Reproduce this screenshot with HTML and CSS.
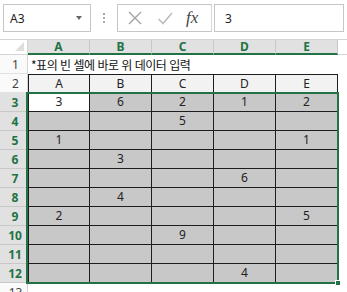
FILE: index.html
```html
<!DOCTYPE html>
<html lang="ko">
<head>
<meta charset="utf-8">
<link rel="stylesheet" href="styles.css">
</head>
<body>
<div class="fbar">
  <div class="namebox"><span class="ref">A3</span><span class="caret"></span></div>
  <div class="dots"><i></i><i></i><i></i></div>
  <div class="fxbox">
    <svg class="ic" width="16" height="16" viewBox="0 0 16 16"><path d="M2 2 L14 14 M14 2 L2 14" stroke="#a3a3a3" stroke-width="1.4" fill="none"/></svg>
    <svg class="ic" width="16" height="16" viewBox="0 0 16 16"><path d="M1.5 9 L6 13.5 L15 3" stroke="#bdbdbd" stroke-width="1.6" fill="none"/></svg>
    <span class="fx">fx</span>
  </div>
  <div class="input">3</div>
</div>

<div class="sheet">
  <div class="corner"></div>
  <div class="ch">A</div><div class="ch">B</div><div class="ch">C</div><div class="ch">D</div><div class="ch">E</div><div class="ch rest"></div>

  <div class="rh">1</div>
  <div class="title">*표의 빈 셀에 바로 위 데이터 입력</div>

  <div class="rh">2</div>
  <div class="c hd first">A</div><div class="c hd">B</div><div class="c hd">C</div><div class="c hd">D</div><div class="c hd">E</div><div class="blank"></div>

  <div class="rh sel">3</div>
  <div class="c first active">3</div><div class="c">6</div><div class="c">2</div><div class="c">1</div><div class="c">2</div><div class="blank"></div>

  <div class="rh sel">4</div>
  <div class="c first"></div><div class="c"></div><div class="c">5</div><div class="c"></div><div class="c"></div><div class="blank"></div>

  <div class="rh sel">5</div>
  <div class="c first">1</div><div class="c"></div><div class="c"></div><div class="c"></div><div class="c">1</div><div class="blank"></div>

  <div class="rh sel">6</div>
  <div class="c first"></div><div class="c">3</div><div class="c"></div><div class="c"></div><div class="c"></div><div class="blank"></div>

  <div class="rh sel">7</div>
  <div class="c first"></div><div class="c"></div><div class="c"></div><div class="c">6</div><div class="c"></div><div class="blank"></div>

  <div class="rh sel">8</div>
  <div class="c first"></div><div class="c">4</div><div class="c"></div><div class="c"></div><div class="c"></div><div class="blank"></div>

  <div class="rh sel">9</div>
  <div class="c first">2</div><div class="c"></div><div class="c"></div><div class="c"></div><div class="c">5</div><div class="blank"></div>

  <div class="rh sel">10</div>
  <div class="c first"></div><div class="c"></div><div class="c">9</div><div class="c"></div><div class="c"></div><div class="blank"></div>

  <div class="rh sel">11</div>
  <div class="c first"></div><div class="c"></div><div class="c"></div><div class="c"></div><div class="c"></div><div class="blank"></div>

  <div class="rh sel">12</div>
  <div class="c first"></div><div class="c"></div><div class="c"></div><div class="c">4</div><div class="c"></div><div class="blank"></div>

  <div class="rh">13</div>

  <div class="selection"><span class="handle"></span></div>
</div>
</body>
</html>
```

FILE: styles.css
```css
* { box-sizing: border-box; }
html, body { margin: 0; padding: 0; background: #fff; }
body {
  width: 347px;
  height: 292px;
  overflow: hidden;
  font-family: "Noto Sans", "Noto Sans CJK KR", sans-serif;
  font-size: 11px;
  color: #222;
}

.fbar {
  display: flex;
  align-items: stretch;
  height: 28px;
  padding: 0 3px;
  margin-top: 4px;
}
.namebox {
  width: 88px;
  border: 1px solid #c6c6c6;
  display: flex;
  align-items: center;
  justify-content: space-between;
  padding: 0 8px 0 6px;
  font-size: 12px;
  color: #222;
}
.caret {
  width: 0; height: 0;
  border-left: 3px solid transparent;
  border-right: 3px solid transparent;
  border-top: 4px solid #666;
}
.dots {
  width: 26px;
  display: flex;
  flex-direction: column;
  align-items: center;
  justify-content: center;
  gap: 2px;
}
.dots i { width: 2px; height: 2px; background: #a8a8a8; display: block; }
.fxbox {
  width: 95px;
  border: 1px solid #c6c6c6;
  border-right: 1px solid #d8d8d8;
  display: flex;
  align-items: center;
  padding-left: 9px;
  gap: 14px;
}
.ic { display: block; }
.fx {
  font-family: "Liberation Serif", serif;
  font-style: italic;
  font-size: 17px;
  color: #444;
  margin-left: -1px;
}
.input {
  margin-left: 2px;
  flex: 1;
  border: 1px solid #c6c6c6;
  display: flex;
  align-items: center;
  padding-left: 10px;
  font-size: 12px;
}

.sheet {
  position: relative;
  margin-top: 7px;
  display: grid;
  grid-template-columns: 28px repeat(5, 62px) 1fr;
  grid-template-rows: 16px repeat(13, 19px);
}
.corner {
  background: #fff;
  border-right: 1px solid #d4d4d4;
  border-bottom: 1px solid #d4d4d4;
  border-top: 1px solid #d4d4d4;
  position: relative;
}
.corner::after {
  content: "";
  position: absolute;
  right: 3px; bottom: 3px;
  border-left: 9px solid transparent;
  border-bottom: 9px solid #dedede;
}
.ch {
  background: #e1e1e1;
  border-top: 1px solid #d4d4d4;
  border-right: 1px solid #c8c8c8;
  border-bottom: 2px solid #217346;
  color: #217346;
  font-weight: bold;
  text-align: center;
  line-height: 13px;
  font-size: 12px;
}
.ch.rest {
  background: #fff;
  border-bottom: 1px solid #d4d4d4;
  border-right: none;
}
.rh {
  grid-column: 1;
  background: #fafafa;
  border-right: 1px solid #d4d4d4;
  border-bottom: 1px solid #e2e2e2;
  color: #444;
  text-align: center;
  line-height: 19px;
  font-size: 12px;
  padding-left: 4px;
}
.rh.sel {
  background: #e1e1e1;
  color: #217346;
  font-weight: bold;
  border-right: 2px solid #217346;
  border-bottom: 1px solid #c8c8c8;
}
.title {
  grid-column: 2 / span 6;
  padding-left: 3px;
  line-height: 19px;
  font-family: "Noto Sans CJK KR", sans-serif;
  font-size: 12px;
  color: #111;
  white-space: nowrap;
  letter-spacing: -0.5px;
}
.c {
  background: #c8c8c8;
  border-right: 1px solid #1e1e1e;
  border-bottom: 1px solid #1e1e1e;
  text-align: center;
  line-height: 18px;
  font-size: 12px;
  color: #222;
}
.c.first { border-left: 1px solid #1e1e1e; }
.c.hd {
  background: #f2f2f2;
  border-top: 1px solid #1e1e1e;
  line-height: 17px;
}
.c.active { background: #fff; }
.blank { background: #fff; }
.selection {
  position: absolute;
  left: 26px;
  top: 53px;
  width: 313px;
  height: 192px;
  border: 2px solid #217346;
  pointer-events: none;
}
.handle {
  position: absolute;
  right: -4px;
  bottom: -4px;
  width: 6px;
  height: 6px;
  background: #217346;
  border: 1px solid #fff;
}
```
